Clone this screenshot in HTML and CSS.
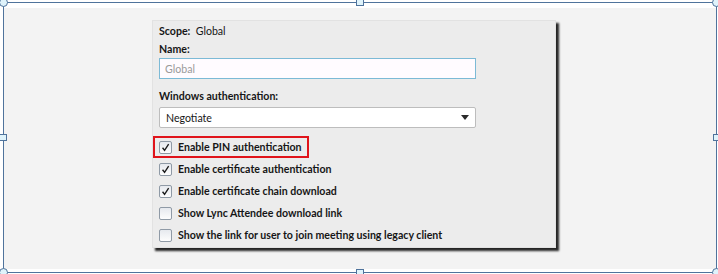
FILE: index.html
```html
<!DOCTYPE html>
<html lang="en">
<head>
  <meta charset="UTF-8">
  <title>Web Service Settings</title>
  <link rel="stylesheet" href="styles.css">
</head>
<body>
  <div class="frame">
    <div class="canvas">
      <div class="panel">
        <div class="line"><strong>Scope:</strong>&nbsp; Global</div>
        <div class="line"><strong>Name:</strong></div>
        <input class="field" type="text" placeholder="Global">

        <div class="line spaced"><strong>Windows authentication:</strong></div>
        <div class="select">
          <span>Negotiate</span>
          <span class="arrow"></span>
        </div>

        <ul class="options">
          <li class="option highlight">
            <span class="box checked"><svg viewBox="0 0 13 13"><path d="M3 6.8 L5.4 9.8 L10.2 2.6"/></svg></span>
            Enable PIN authentication
          </li>
          <li class="option">
            <span class="box checked"><svg viewBox="0 0 13 13"><path d="M3 6.8 L5.4 9.8 L10.2 2.6"/></svg></span>
            Enable certificate authentication
          </li>
          <li class="option">
            <span class="box checked"><svg viewBox="0 0 13 13"><path d="M3 6.8 L5.4 9.8 L10.2 2.6"/></svg></span>
            Enable certificate chain download
          </li>
          <li class="option">
            <span class="box"></span>
            Show Lync Attendee download link
          </li>
          <li class="option">
            <span class="box"></span>
            Show the link for user to join meeting using legacy client
          </li>
        </ul>
      </div>
    </div>

    <!-- selection handles -->
    <span class="handle round tl"></span>
    <span class="handle round tr"></span>
    <span class="handle round bl"></span>
    <span class="handle round br"></span>
    <span class="handle square tm"></span>
    <span class="handle square bm"></span>
    <span class="handle square lm"></span>
    <span class="handle square rm"></span>
  </div>
</body>
</html>
```

FILE: styles.css
```css
:root {
  --frame-color: #4f739c;
  --handle-fill: #dff3fb;
  --canvas-bg: #f3f3f3;
  --panel-bg: #ececec;
  --text-color: #161616;
  --red: #e0141b;
}

* {
  margin: 0;
  padding: 0;
  box-sizing: border-box;
}

body {
  background: #fff;
  font-family: 'Lato', 'Open Sans', sans-serif;
  font-size: 10.6px;
  color: var(--text-color);
  width: 718px;
  height: 274px;
  overflow: hidden;
}

.frame {
  position: relative;
  margin: 2px 0 0 3px;
  width: 714px;
  height: 271px;
  border: 1px solid var(--frame-color);
  padding: 5px 0 3px 0;
}

.canvas {
  height: 100%;
  background: var(--canvas-bg);
  padding: 12px 0 0 148px;
}

.panel {
  width: 404px;
  height: 228px;
  background: var(--panel-bg);
  border: 1px solid #e2e2e2;
  box-shadow: 3px 3px 2px rgba(0, 0, 0, 0.85);
  padding: 1px 0 0 6px;
}

.line {
  height: 18px;
  line-height: 18px;
}

.line strong {
  font-weight: 700;
}

.line.spaced {
  margin-top: 8px;
}

.field {
  display: block;
  width: 317px;
  height: 21px;
  border: 1px solid #7cbad6;
  background: #fffbff;
  font-family: inherit;
  font-size: 10.6px;
  padding: 0 5px;
}

.field::placeholder {
  color: #9a9a9a;
}

.select {
  display: flex;
  align-items: center;
  justify-content: space-between;
  width: 317px;
  height: 21px;
  margin-top: 2px;
  border: 1px solid #bdbdbd;
  border-radius: 2px;
  background: #fff;
  padding: 0 6px 0 6px;
}

.arrow {
  width: 0;
  height: 0;
  border-left: 4px solid transparent;
  border-right: 4px solid transparent;
  border-top: 5px solid #2a2a2a;
}

.options {
  list-style: none;
  margin: 8px 0 0 -6px;
}

.option {
  display: flex;
  align-items: center;
  height: 22px;
  padding-left: 6px;
  font-weight: 700;
}

.option.highlight {
  width: fit-content;
  border: 2px solid var(--red);
  padding: 0 5px 0 4px;
}

.box {
  width: 13px;
  height: 13px;
  margin-right: 6px;
  border: 1px solid #8f9aa6;
  border-radius: 2px;
  background: linear-gradient(#e6e9ee, #fdfdfd);
}

.box svg {
  display: block;
  width: 11px;
  height: 11px;
}

.box path {
  fill: none;
  stroke: #1a1a1a;
  stroke-width: 1.6;
}

.handle {
  position: absolute;
  background: var(--handle-fill);
  border: 1px solid var(--frame-color);
}

.handle.round {
  width: 9px;
  height: 9px;
  border-radius: 50%;
}

.handle.square {
  width: 8px;
  height: 7px;
}

.tl { left: -5px; top: -5px; }
.tr { right: -5px; top: -5px; }
.bl { left: -5px; bottom: -5px; }
.br { right: -5px; bottom: -5px; }
.tm { left: 352px; top: -4px; }
.bm { left: 352px; bottom: -4px; }
.lm { left: -5px; top: 131px; }
.rm { right: -5px; top: 131px; }
```
